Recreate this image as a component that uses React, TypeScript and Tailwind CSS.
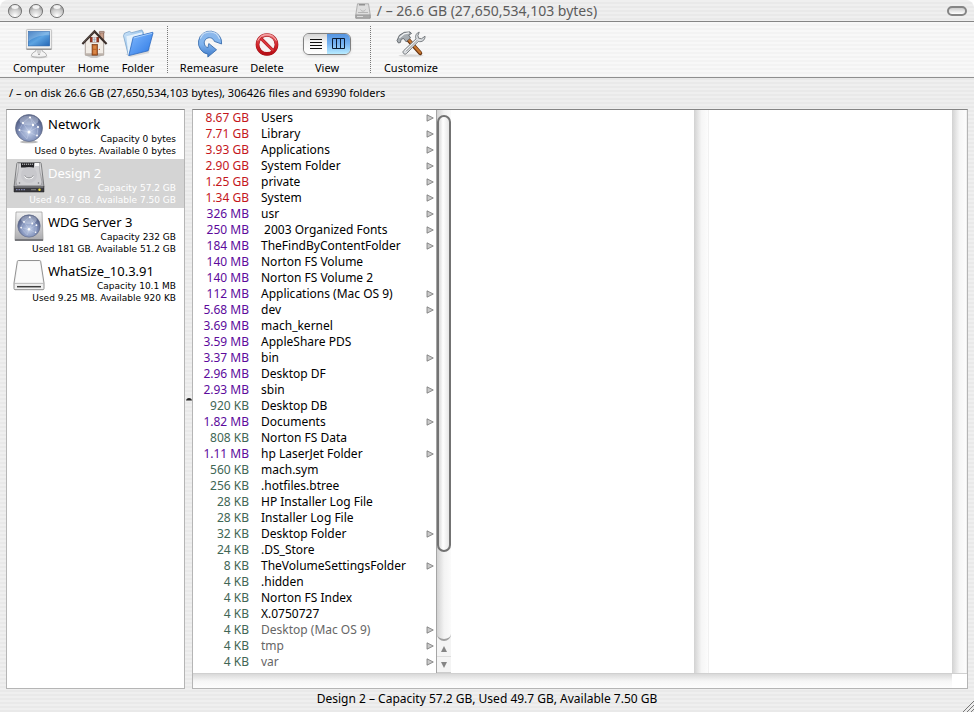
import React, { useState } from "react";
import clsx from "clsx";

type Entry = { size: string; name: string; folder?: boolean; dim?: boolean };

const entries: Entry[] = [
  { size: "8.67 GB", name: "Users", folder: true },
  { size: "7.71 GB", name: "Library", folder: true },
  { size: "3.93 GB", name: "Applications", folder: true },
  { size: "2.90 GB", name: "System Folder", folder: true },
  { size: "1.25 GB", name: "private", folder: true },
  { size: "1.34 GB", name: "System", folder: true },
  { size: "326 MB", name: "usr", folder: true },
  { size: "250 MB", name: " 2003 Organized Fonts", folder: true },
  { size: "184 MB", name: "TheFindByContentFolder", folder: true },
  { size: "140 MB", name: "Norton FS Volume" },
  { size: "140 MB", name: "Norton FS Volume 2" },
  { size: "112 MB", name: "Applications (Mac OS 9)", folder: true },
  { size: "5.68 MB", name: "dev", folder: true },
  { size: "3.69 MB", name: "mach_kernel" },
  { size: "3.59 MB", name: "AppleShare PDS" },
  { size: "3.37 MB", name: "bin", folder: true },
  { size: "2.96 MB", name: "Desktop DF" },
  { size: "2.93 MB", name: "sbin", folder: true },
  { size: "920 KB", name: "Desktop DB" },
  { size: "1.82 MB", name: "Documents", folder: true },
  { size: "808 KB", name: "Norton FS Data" },
  { size: "1.11 MB", name: "hp LaserJet Folder", folder: true },
  { size: "560 KB", name: "mach.sym" },
  { size: "256 KB", name: ".hotfiles.btree" },
  { size: "28 KB", name: "HP Installer Log File" },
  { size: "28 KB", name: "Installer Log File" },
  { size: "32 KB", name: "Desktop Folder", folder: true },
  { size: "24 KB", name: ".DS_Store" },
  { size: "8 KB", name: "TheVolumeSettingsFolder", folder: true },
  { size: "4 KB", name: ".hidden" },
  { size: "4 KB", name: "Norton FS Index" },
  { size: "4 KB", name: "X.0750727" },
  { size: "4 KB", name: "Desktop (Mac OS 9)", folder: true, dim: true },
  { size: "4 KB", name: "tmp", folder: true, dim: true },
  { size: "4 KB", name: "var", folder: true, dim: true },
];

const sizeColor = (size: string) => {
  if (size.endsWith("GB")) return "text-[#c4161c]";
  if (size.endsWith("MB")) return "text-[#5c0a9c]";
  return "text-[#3f6655]";
};

const Gradients = () => (
  <svg className="absolute h-0 w-0" aria-hidden="true">
    <defs>
      <linearGradient id="screen" x1="0" y1="0" x2="1" y2="1">
        <stop offset="0" stopColor="#1d62b4" />
        <stop offset="0.5" stopColor="#5da4e2" />
        <stop offset="1" stopColor="#2466b4" />
      </linearGradient>
      <linearGradient id="metal" x1="0" y1="0" x2="0" y2="1">
        <stop offset="0" stopColor="#f2f2f2" />
        <stop offset="1" stopColor="#a9a9ad" />
      </linearGradient>
      <linearGradient id="folderFront" x1="0" y1="0" x2="1" y2="1">
        <stop offset="0" stopColor="#83bbff" />
        <stop offset="1" stopColor="#2c78e4" />
      </linearGradient>
      <linearGradient id="folderBack" x1="0" y1="0" x2="1" y2="1">
        <stop offset="0" stopColor="#cfe6fa" />
        <stop offset="1" stopColor="#6ea6dc" />
      </linearGradient>
      <linearGradient id="arrow" x1="0" y1="0" x2="0" y2="1">
        <stop offset="0" stopColor="#8fb9ea" />
        <stop offset="0.5" stopColor="#80b4ef" />
        <stop offset="1" stopColor="#3c78c8" />
      </linearGradient>
      <linearGradient id="red" x1="0" y1="0" x2="0" y2="1">
        <stop offset="0" stopColor="#e8767a" />
        <stop offset="0.5" stopColor="#d3262c" />
        <stop offset="1" stopColor="#b80f17" />
      </linearGradient>
      <radialGradient id="globe" cx="0.5" cy="0.65" r="0.6">
        <stop offset="0" stopColor="#c6d3ec" />
        <stop offset="0.55" stopColor="#8797bf" />
        <stop offset="1" stopColor="#4c587f" />
      </radialGradient>
      <radialGradient id="bead" cx="0.5" cy="0.85" r="0.8">
        <stop offset="0" stopColor="#ffffff" />
        <stop offset="0.6" stopColor="#c9c9c9" />
        <stop offset="1" stopColor="#8b8b8b" />
      </radialGradient>
    </defs>
  </svg>
);

const ComputerIcon = () => (
  <svg viewBox="0 0 32 32" className="h-8 w-8">
    <ellipse cx="16" cy="30" rx="9" ry="1.500" fill="#d5d5d5" />
    <path d="M13 22h6l.5 2c2.500 1 4.300 2.900 4.300 4.500 0 1-3 1.600-7.800 1.600s-7.800-.6-7.800-1.600c0-1.600 1.800-3.500 4.300-4.500z" fill="#f3f3f3" stroke="#8e8e8e" strokeWidth=".7" />
    <path d="M13.500 22h5l-.6 4h-3.800z" fill="#d4d4d4" />
    <circle cx="16" cy="27" r=".8" fill="#777" />
    <rect x="3" y="1.500" width="26" height="20.500" rx="1" fill="#f0f0f0" stroke="#b5b5b5" strokeWidth=".8" />
    <rect x="5" y="3.500" width="22" height="15" fill="url(#screen)" stroke="#2461a8" strokeWidth=".6" />
    <path d="M5 3.500h22v4C19 7 11 9 5 14z" fill="#fff" opacity=".22" />
    <path d="M3 21.800h26" stroke="#777" />
  </svg>
);

const HomeIcon = () => (
  <svg viewBox="0 0 32 32" className="h-8 w-8">
    <path d="M7 28l9-1 9 1-6 3h-6z" fill="#c9c9c9" />
    <path d="M22 4h4v10l-4-4z" fill="#c9a08b" stroke="#6e4735" strokeWidth=".7" />
    <path d="M21.500 3.500h5v1.500h-5z" fill="#e5d5cc" stroke="#6e4735" strokeWidth=".5" />
    <path d="M7 14l9.500-10L26 14v14H7z" fill="#f1ece6" stroke="#8a7d74" strokeWidth=".7" />
    <path d="M7 26h19v2H7z" fill="#bdb3ab" />
    <path d="M4 16.500L16.500 3.500 29 16.500" fill="none" stroke="#3b2f2b" strokeWidth="2.200" />
    <path d="M5 15L16.500 3" stroke="#79706c" strokeWidth=".6" />
    <rect x="12" y="9.500" width="9" height="5" fill="#9c331c" stroke="#4a1b10" strokeWidth=".4" />
    <rect x="14.500" y="9.500" width="4" height="5" fill="#dbe6ee" />
    <path d="M14.500 12h4M16.500 9.500v5" stroke="#7c8790" strokeWidth=".4" />
    <rect x="14" y="17" width="5.500" height="11" fill="#bf6528" stroke="#6b3010" strokeWidth=".7" />
    <path d="M15.200 18.300h3.100v3.200h-3.100zM15.200 22.800h3.100v3.700h-3.100z" fill="#d98748" />
    <circle cx="21.500" cy="22" r=".7" fill="#b64b22" />
  </svg>
);

const FolderIcon = () => (
  <svg viewBox="0 0 32 32" className="h-8 w-8">
    <path d="M3 27l5 3 19-4 2-6z" fill="#aaa" opacity=".35" />
    <path d="M1 8l1-2.500 5-2 2.500 1.300L20 2l1.500 2.500V21L6 28z" fill="url(#folderBack)" stroke="#6c98c2" strokeWidth=".7" />
    <path d="M4 8.500L20 4.500l1 3L8 27l-2 1z" fill="#e5f2fc" />
    <path d="M11 9.500L31 4.500c.4 0 .6.300.5.700L26.500 23.500 6.500 28.500z" fill="url(#folderFront)" stroke="#2a66bd" strokeWidth=".8" />
    <path d="M11.500 10.300L30.500 5.500" stroke="#b9dcff" strokeWidth=".8" />
  </svg>
);

const RemeasureIcon = () => (
  <svg viewBox="0 0 32 32" className="h-8 w-8">
    <path
      d="M29 16.500A12 12 0 1 0 14.800 27V30l9-7.500-8-6.500-.9 4.400A5.300 5.300 0 1 1 21.500 13.800z"
      fill="url(#arrow)" stroke="#386cac" strokeWidth=".9" strokeLinejoin="round"
    />
    <path d="M7 11A10.500 10.500 0 0 1 27 11.500" fill="none" stroke="#d7e9fb" strokeWidth="1.200" opacity=".8" />
  </svg>
);

const DeleteIcon = () => (
  <svg viewBox="0 0 32 32" className="h-8 w-8">
    <circle cx="16" cy="17" r="9.800" fill="#f8f2f2" stroke="#9c1218" strokeWidth="3.800" />
    <circle cx="16" cy="17" r="9.800" fill="none" stroke="url(#red)" strokeWidth="2.800" />
    <path d="M9.500 10.500l13 13" stroke="#a9141a" strokeWidth="3.200" />
    <path d="M9.500 10.500l13 13" stroke="#d9353a" strokeWidth="2.200" />
    <path d="M6.500 13A10.500 10.500 0 0 1 25.500 13" fill="none" stroke="#ffc5c5" strokeWidth="1" opacity=".8" />
  </svg>
);

const CustomizeIcon = () => (
  <svg viewBox="0 0 32 32" className="h-8 w-8">
    <ellipse cx="16" cy="28.500" rx="13" ry="1.300" fill="#d8d8d8" />
    <path d="M12.500 11.500l13 14.500" stroke="#683411" strokeWidth="4.200" strokeLinecap="round" />
    <path d="M12.500 11l13 14.500" stroke="#c77731" strokeWidth="2.400" strokeLinecap="round" />
    <path d="M3 15.500L1.500 13 4 7.500 9 4.500l6-.5 1.500 1.700-2.800 1.600 1.800 3-4.500 4L8.500 11 6 11.500 5 15z" fill="#a7adb2" stroke="#51575c" strokeWidth=".8" />
    <path d="M4 10l5-4 5-1" fill="none" stroke="#f2f4f5" strokeWidth="1.300" />
    <path
      d="M24.500 4.300c-3 .8-4.600 3.900-3.300 6.900L8.300 23.500c-1.800 1.600.9 4.700 2.900 3L23.600 13.800c3.600 1.200 7-1.300 6.900-5.300l-3.700 2.600-3-.6-.7-2.700z"
      fill="#dcdfe2" stroke="#676c70" strokeWidth=".9"
    />
    <path d="M11 24l11.500-11.500" stroke="#8c9195" strokeWidth="1" />
    <path d="M10 23.500l11.500-11" stroke="#fff" strokeWidth=".8" />
  </svg>
);

const GlobeArt = () => (
  <g>
    <circle cx="16" cy="16" r="13.500" fill="url(#globe)" stroke="#626b87" strokeWidth=".7" />
    <ellipse cx="16" cy="8.500" rx="9.500" ry="5" fill="#dfe5f2" opacity=".4" />
    <path d="M17 5l-7 6-4 7 10 2 9-5-8-10 3 8-4 7-6-9M6 18l8 9 2-7 8 4 1-9" fill="none" stroke="#dbe3f5" strokeWidth=".4" opacity=".8" />
    <g fill="#fff">
      <circle cx="17" cy="5.500" r="1.100" />
      <circle cx="10" cy="11" r="1.100" />
      <circle cx="20" cy="13" r="1.200" />
      <circle cx="16" cy="20" r="1.500" />
      <circle cx="6.500" cy="18" r="1" />
      <circle cx="25" cy="15" r="1.100" />
      <circle cx="24" cy="23.500" r=".9" />
    </g>
  </g>
);

const NetworkIcon = () => (
  <svg viewBox="0 0 32 32" className="h-8 w-8">
    <ellipse cx="16" cy="30" rx="9" ry="1.300" fill="#bbb" />
    <GlobeArt />
  </svg>
);

const ServerIcon = () => (
  <svg viewBox="0 0 32 32" className="h-8 w-8">
    <path d="M3 2h26l1 26v2.500H2V28z" fill="url(#metal)" stroke="#999" strokeWidth=".7" />
    <path d="M2 29h28v2H2z" fill="#77787c" />
    <g transform="translate(2.700 2.700) scale(.83)">
      <GlobeArt />
    </g>
  </svg>
);

const HardDiskIcon = () => (
  <svg viewBox="0 0 32 32" className="h-8 w-8">
    <path d="M5 1.500h22c.7 0 1 .4 1.200 1L31 26H1L3.800 2.500c.1-.6.500-1 1.200-1z" fill="url(#metal)" stroke="#66676a" strokeWidth=".8" />
    <path d="M5 2.500C6 9 4.500 13 3 21l1 3.500h24l1-3.500C27.500 13 26 9 27 2.500z" fill="#d0d0d3" stroke="#8e8e92" strokeWidth=".6" />
    <rect x="8" y="2" width="13" height="4.500" fill="#242427" />
    <path d="M9 3.200h11" stroke="#eee" strokeWidth=".9" strokeDasharray="1.200 .8" />
    <path d="M22 2h4v3h-4z" fill="#f8f8f8" />
    <circle cx="16" cy="14" r="8" fill="#c6c6ca" opacity=".8" />
    <path d="M12 15c1 3.200 7 3.200 8 0" fill="none" stroke="#fff" strokeWidth="1.500" />
    <path d="M12 14.500c1 3.200 7 3.200 8 0" fill="none" stroke="#67686c" strokeWidth=".8" />
    <g fill="#77787c">
      <circle cx="6.500" cy="22" r=".8" />
      <circle cx="25.500" cy="22" r=".8" />
    </g>
    <path d="M1 25.500h30V31H1z" fill="#39393e" stroke="#222" strokeWidth=".5" />
    <path d="M1.500 26h29" stroke="#b5b5ba" strokeWidth=".8" />
    <path d="M3 28.700h10" stroke="#8084ad" strokeWidth="1.200" strokeDasharray="1.500 1" />
    <path d="M18 28.700h5" stroke="#777" strokeWidth="1.300" />
    <circle cx="26.500" cy="28.700" r="1.200" fill="#f2dd35" />
  </svg>
);

const TitleDiskIcon = () => (
  <svg viewBox="0 0 16 16" className="h-4 w-4">
    <path d="M2.500.8h11l1.700 10.700v3.700H.8v-3.700z" fill="#dedede" stroke="#9a9a9a" strokeWidth=".7" />
    <path d="M4 1h6v1.500H4z" fill="#929292" />
    <path d="M5.500 6.500c1 2.200 4 2.200 5 0M3 9.500h10" fill="none" stroke="#aaa" strokeWidth=".8" />
    <path d="M.8 11.800h14.400v3.400H.8z" fill="#aaa" stroke="#888" strokeWidth=".5" />
    <path d="M2 13.500h6" stroke="#e7e7e7" strokeWidth=".8" />
  </svg>
);

const RemovableIcon = () => (
  <svg viewBox="0 0 32 32" className="h-8 w-8">
    <path d="M5.500 1.500h21c.7 0 1.100.3 1.200 1L31 24v5.500c0 .8-.4 1.200-1.200 1.200H2.200c-.8 0-1.200-.4-1.200-1.200V24L4.300 2.500c.1-.7.500-1 1.200-1z" fill="#f0f0f0" stroke="#777" strokeWidth=".8" />
    <path d="M5.500 2.500h21L29.500 23h-27z" fill="#fbfbfb" />
    <path d="M1.500 24.500h29" stroke="#aaa" strokeWidth=".7" />
    <path d="M4 27.700h24" stroke="#3f3f3f" strokeWidth="1.500" />
    <path d="M1.500 30.500h29" stroke="#a0a0a0" />
  </svg>
);

const volumes = [
  { name: "Network", capacity: "Capacity 0 bytes", usage: "Used 0 bytes. Available 0 bytes", Icon: NetworkIcon },
  { name: "Design 2", capacity: "Capacity 57.2 GB", usage: "Used 49.7 GB. Available 7.50 GB", Icon: HardDiskIcon },
  { name: "WDG Server 3", capacity: "Capacity 232 GB", usage: "Used 181 GB. Available 51.2 GB", Icon: ServerIcon },
  { name: "WhatSize_10.3.91", capacity: "Capacity 10.1 MB", usage: "Used 9.25 MB. Available 920 KB", Icon: RemovableIcon },
];

const WindowButton = ({ label }: { label: string }) => (
  <button aria-label={label} className="h-4 w-4">
    <svg viewBox="0 0 16 16" className="h-4 w-4">
      <circle cx="8" cy="8" r="6.600" fill="url(#bead)" stroke="#707070" strokeWidth=".9" />
      <ellipse cx="8" cy="4" rx="3.600" ry="1.900" fill="#fff" opacity=".85" />
    </svg>
  </button>
);

const ToolbarItem = ({ label, width, children }: { label: string; width: string; children: React.ReactNode }) => (
  <button className={clsx("flex flex-col items-center", width)}>
    {children}
    <span className="leading-[18px] whitespace-nowrap">{label}</span>
  </button>
);

const Separator = () => <div className="my-1 w-px self-stretch border-l border-dotted border-[#777]" />;

const Scroller = () => (
  <div className="w-[15px] shrink-0 bg-linear-to-r from-[#d2d2d2] via-[#f6f6f6] via-50% to-[#fdfdfd] shadow-[inset_-1px_0_#f1f1f1]" />
);

const ActiveScroller = () => (
  <div className="flex w-[15px] shrink-0 flex-col border-l border-[#a5a5a5] bg-[#f4f4f4]">
    <div className="flex flex-1 flex-col rounded-b-full border-b-2 border-[#a0a0a0] bg-linear-to-r from-[#d2d2d2] via-[#f3f3f3] via-50% to-[#fbfbfb] pt-[5px]">
      <div className="flex-[5] rounded-full border-2 border-[#737373] bg-linear-to-r from-[#d9d9d9] via-white via-40% to-[#e6e6e6]" />
      <div className="flex-[1]" />
    </div>
    <button aria-label="Scroll up" className="flex h-4 items-center justify-center border-b border-[#ddd]">
      <svg viewBox="0 0 8 8" className="h-2 w-2"><path d="M4 1l3 6H1z" fill="#858585" /></svg>
    </button>
    <button aria-label="Scroll down" className="flex h-4 items-center justify-center border-b border-[#ccc]">
      <svg viewBox="0 0 8 8" className="h-2 w-2"><path d="M4 7L1 1h6z" fill="#858585" /></svg>
    </button>
  </div>
);

const App = () => {
  const [volume, setVolume] = useState("Design 2");
  const [view, setView] = useState("columns");

  return (
    <div className="bg-white">
      <Gradients />
      <div className="flex min-h-screen flex-col overflow-hidden rounded-t-lg bg-[#ededed] bg-[repeating-linear-gradient(to_bottom,#efefef_0px,#efefef_2px,#e9e9e9_2px,#e9e9e9_4px)] font-['Noto_Sans','Lucida_Grande',sans-serif] text-[11px] text-black">
        <header className="flex h-[22px] items-center justify-between border-b border-[#858585] px-[7px]">
          <div className="flex flex-1 gap-[5px]">
            <WindowButton label="Close" />
            <WindowButton label="Minimize" />
            <WindowButton label="Zoom" />
          </div>
          <div className="flex items-center gap-1.5 pr-[22px] text-sm text-[#5c5c5c]">
            <TitleDiskIcon />
            <h1 className="leading-5 whitespace-nowrap">/ – 26.6 GB (27,650,534,103 bytes)</h1>
          </div>
          <div className="flex flex-1 justify-end">
            <button aria-label="Toggle toolbar" className="h-[10px] w-5 rounded-full border-2 border-[#858585] bg-linear-to-b from-[#ccc] to-white" />
          </div>
        </header>

        <div className="flex h-14 gap-3 border-b border-[#8f8f8f] bg-[repeating-linear-gradient(to_bottom,#f8f8f8_0px,#f8f8f8_2px,#f3f3f3_2px,#f3f3f3_4px)] pl-3">
          <div className="flex gap-3 pt-1.5">
            <ToolbarItem label="Computer" width="w-[54px]"><ComputerIcon /></ToolbarItem>
            <ToolbarItem label="Home" width="w-[31px]"><HomeIcon /></ToolbarItem>
            <ToolbarItem label="Folder" width="w-[34px]"><FolderIcon /></ToolbarItem>
          </div>
          <Separator />
          <div className="flex gap-3 pt-1.5">
            <ToolbarItem label="Remeasure" width="w-[58px]"><RemeasureIcon /></ToolbarItem>
            <ToolbarItem label="Delete" width="w-[34px]"><DeleteIcon /></ToolbarItem>
            <div className="flex w-[62px] flex-col items-center">
              <div className="flex h-8 items-center">
                <div className="flex h-[22px] w-12 overflow-hidden rounded-md border border-[#808080] shadow-sm">
                  <button
                    aria-label="List view"
                    onClick={() => setView("list")}
                    className={clsx("flex flex-1 items-center justify-center bg-linear-to-b", view === "list" ? "from-[#5b9be6] to-[#b4e2ff]" : "from-[#d5d5d5] via-[#f5f5f5] via-40% to-white")}
                  >
                    <svg viewBox="0 0 12 12" className="h-3 w-3"><path d="M0 1.500h12M0 4.500h12M0 7.500h12M0 10.500h12" stroke="#111" /></svg>
                  </button>
                  <button
                    aria-label="Column view"
                    onClick={() => setView("columns")}
                    className={clsx("flex flex-1 items-center justify-center bg-linear-to-b", view === "columns" ? "from-[#5594e0] via-[#78b4f2] via-50% to-[#b8ecff]" : "from-[#d5d5d5] to-white")}
                  >
                    <svg viewBox="0 0 13 11" className="h-[11px] w-[13px]"><path d="M.5.5h12v10H.5zM4.500.5v10M8.500.5v10" fill="none" stroke="#0b1c33" /></svg>
                  </button>
                </div>
              </div>
              <span className="leading-[18px]">View</span>
            </div>
          </div>
          <Separator />
          <div className="flex pt-1.5">
            <ToolbarItem label="Customize" width="w-14"><CustomizeIcon /></ToolbarItem>
          </div>
        </div>

        <p className="px-[9px] pt-[7px] pb-2 leading-4">
          / – on disk 26.6 GB (27,650,534,103 bytes), 306426 files and 69390 folders
        </p>

        <main className="flex flex-1 px-1.5">
          <nav className="w-[179px] shrink-0 border border-t-[#858585] border-r-[#b5b5b5] border-b-[#b5b5b5] border-l-[#b5b5b5] bg-white">
            {volumes.map(({ name, capacity, usage, Icon }) => (
              <button
                key={name}
                onClick={() => setVolume(name)}
                className={clsx(
                  "block w-full py-0.5 pr-2 pl-1.5 text-right font-['DejaVu_Sans',sans-serif] text-[9px] leading-3 whitespace-nowrap",
                  volume === name && "bg-[#d4d4d4] text-white"
                )}
              >
                <span className="flex h-[33px] gap-[3px]">
                  <Icon />
                  <span className="flex flex-1 flex-col pt-1">
                    <span className="text-left font-['Noto_Sans',sans-serif] text-[13px] leading-[17px]">{name}</span>
                    <span>{capacity}</span>
                  </span>
                </span>
                <span className="block">{usage}</span>
              </button>
            ))}
          </nav>

          <div className="flex w-[7px] shrink-0 items-center justify-center">
            <svg viewBox="0 0 6 4" className="h-1 w-1.5"><path d="M0 3.500C1 .3 5 .3 6 3.500z" fill="#222" /></svg>
          </div>

          <section className="flex min-w-0 flex-1 flex-col border border-t-[#858585] border-r-[#b5b5b5] border-b-[#b5b5b5] border-l-[#b5b5b5] bg-white">
            <div className="grid flex-1 grid-cols-3">
              <div className="flex">
                <ul className="min-w-0 flex-1 pb-[3px] text-xs leading-4">
                  {entries.map((entry) => (
                    <li key={entry.name}>
                      <button className="flex h-4 w-full items-center gap-3 pr-0.5 text-left whitespace-pre">
                        <span className={clsx("w-14 shrink-0 text-right", sizeColor(entry.size))}>{entry.size}</span>
                        <span className={clsx("min-w-0 flex-1", entry.dim && "text-[#666]")}>{entry.name}</span>
                        {entry.folder && (
                          <svg viewBox="0 0 8 8" className="h-2 w-2 shrink-0"><path d="M1 .8L7.300 4 1 7.200z" fill="#c9c9c9" stroke="#777" strokeWidth=".8" /></svg>
                        )}
                      </button>
                    </li>
                  ))}
                </ul>
                <ActiveScroller />
              </div>
              <div className="flex justify-end"><Scroller /></div>
              <div className="flex justify-end"><Scroller /></div>
            </div>
            <div className="flex h-[15px]">
              <div className="flex-1 border-t border-[#d0d0d0] bg-linear-to-b from-[#d9d9d9] via-[#f6f6f6] via-50% to-[#fdfdfd]" />
              <div className="w-[15px] border-t border-[#d0d0d0]" />
            </div>
          </section>
        </main>

        <footer className="relative flex h-[23px] justify-center pt-0.5 text-xs">
          <p className="leading-4">Design 2 – Capacity 57.2 GB, Used 49.7 GB, Available 7.50 GB</p>
          <svg viewBox="0 0 12 12" className="absolute right-0 bottom-0 h-3 w-3">
            <path d="M1 12L12 1M5 12l7-7M9 12l3-3" stroke="#777" />
          </svg>
        </footer>
      </div>
    </div>
  );
};

export default App;
